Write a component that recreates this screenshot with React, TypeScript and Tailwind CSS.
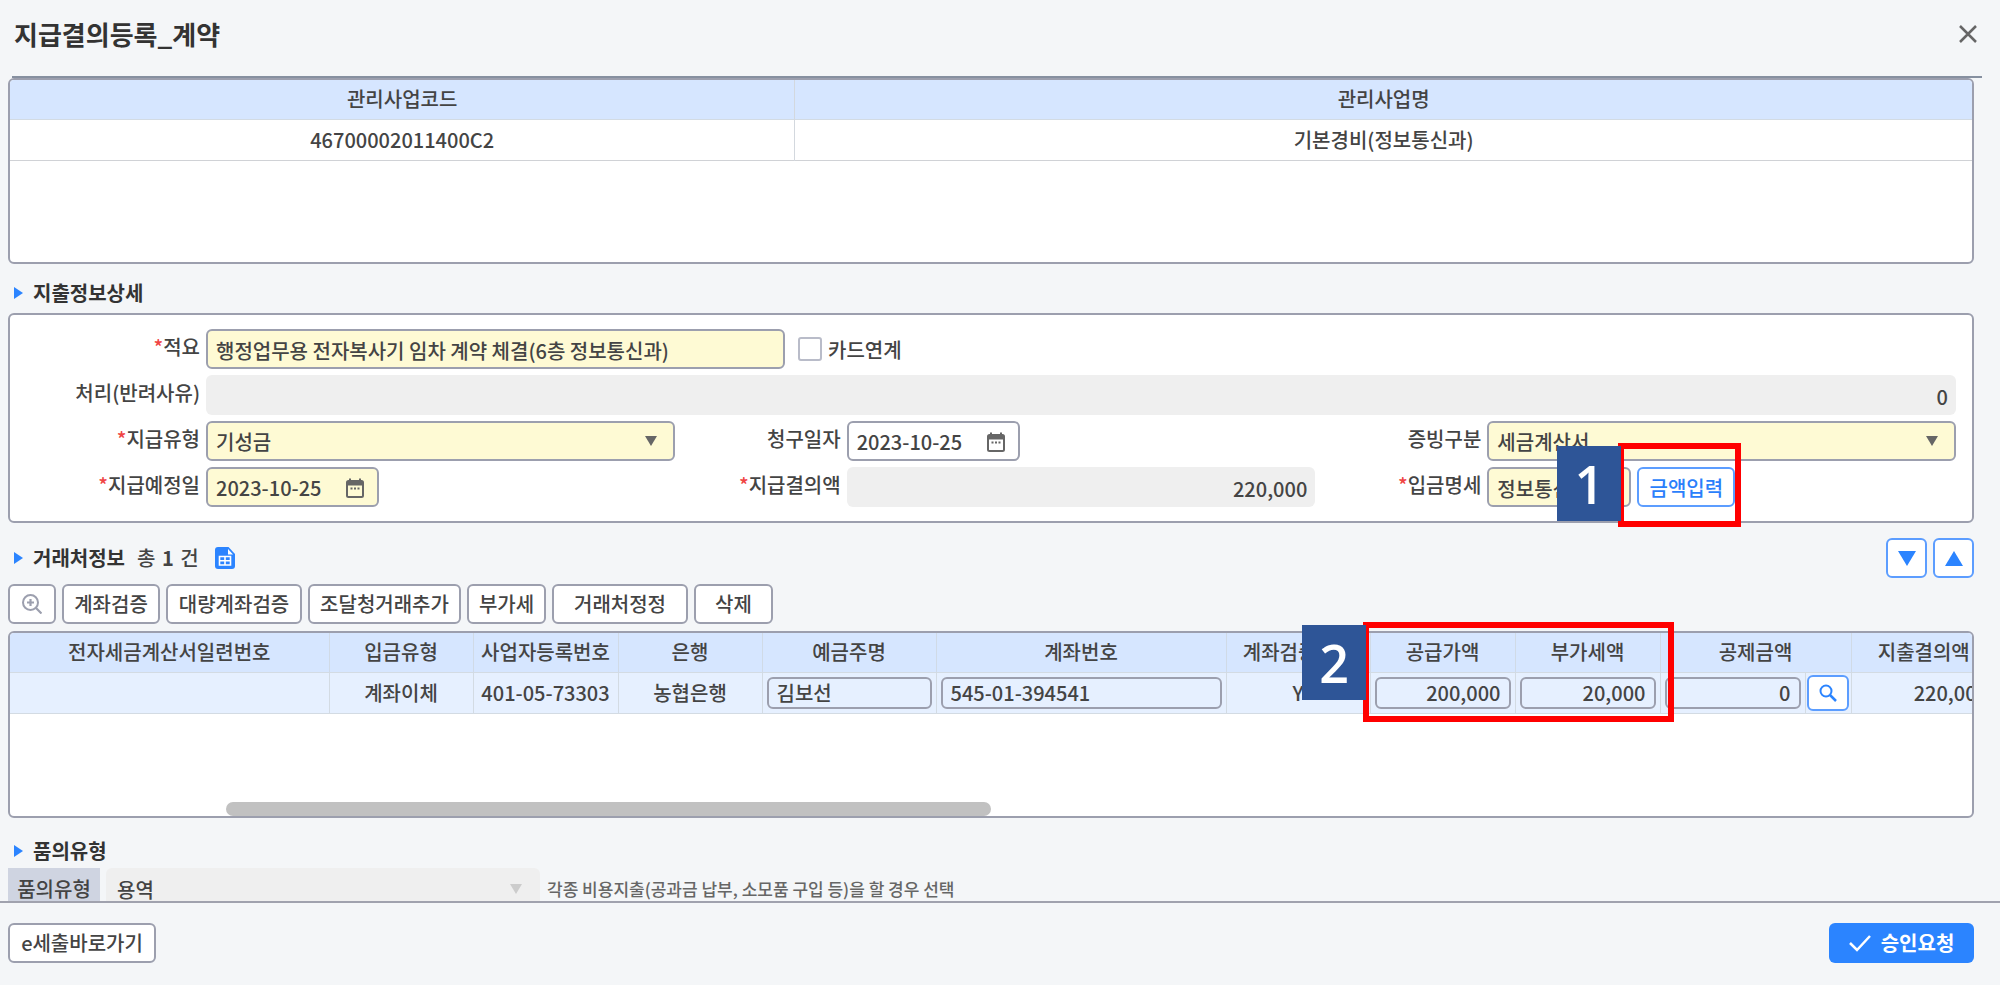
import type { ReactNode } from "react";

const BORDER = "border-2 border-[#9c9fae]";
const FIELD = "h-10 rounded-md px-2 pt-[2px] min-w-0";
const YELLOW = "bg-[#fefad4]";

function Caret({ className = "" }: { className?: string }) {
  return (
    <svg viewBox="0 0 12 10" className={`w-3 h-[10px] ${className}`} fill="currentColor" aria-hidden="true">
      <path d="M0 0h12L6 10z" />
    </svg>
  );
}

function CalendarIcon() {
  return (
    <svg viewBox="0 0 18 20" className="w-[18px] h-5" fill="none" stroke="currentColor" aria-hidden="true">
      <rect x="1" y="3" width="16" height="16" rx="1.5" strokeWidth="2" />
      <path d="M1 3h16v4.500H1z" fill="currentColor" stroke="none" />
      <path d="M4 0.500v4M14 0.500v4" strokeWidth="2" />
      <path d="M4.500 10.500h2M8 10.500h2M11.500 10.500h2" strokeWidth="2" />
    </svg>
  );
}

function SheetIcon() {
  return (
    <svg viewBox="0 0 20 22" className="w-5 h-[22px]" aria-hidden="true">
      <path d="M3 0h10.500L20 7v12a3 3 0 0 1-3 3H3a3 3 0 0 1-3-3V3a3 3 0 0 1 3-3z" fill="#2b84ff" />
      <path d="M13 2v5.500h5z" fill="#fff" />
      <path d="M4.500 9.500h11v8.500h-11zM10 9.500v8.500M4.500 13.700h11" fill="none" stroke="#fff" strokeWidth="1.600" />
    </svg>
  );
}

function SearchIcon() {
  return (
    <svg viewBox="0 0 18 18" className="w-[18px] h-[18px]" fill="none" stroke="currentColor" strokeWidth="2" aria-hidden="true">
      <circle cx="7" cy="7" r="5.500" />
      <path d="M11 11l6 6" strokeWidth="2.500" />
    </svg>
  );
}

function SectionTitle({ children }: { children: ReactNode }) {
  return (
    <h2 className="flex items-center font-bold text-[#333]">
      <svg viewBox="0 0 9 12" className="ml-[6px] mr-[10px] w-[9px] h-3" fill="#2b84ff" aria-hidden="true">
        <path d="M0 0l9 6-9 6z" />
      </svg>
      {children}
    </h2>
  );
}

function Label({ id, required, children }: { id: string; required?: boolean; children: ReactNode }) {
  return (
    <label htmlFor={id} className="w-[172px] shrink-0 pr-[6px] pb-1 text-right">
      {required && <span className="text-[#f04444]">*</span>}
      {children}
    </label>
  );
}

function SelectBox({ id, value }: { id: string; value: string }) {
  return (
    <div className="relative flex-1 min-w-0">
      <select id={id} className={`${FIELD} ${BORDER} ${YELLOW} w-full appearance-none`}>
        <option>{value}</option>
      </select>
      <Caret className="absolute right-[18px] top-[15px] text-[#666] pointer-events-none" />
    </div>
  );
}

function DateBox({ id, tone }: { id: string; tone: string }) {
  return (
    <div className={`${FIELD} ${BORDER} ${tone} w-[173px] flex items-center`}>
      <input id={id} defaultValue="2023-10-25" className="w-[130px] min-w-0 outline-none" />
      <button type="button" aria-label="달력" className="text-[#666]">
        <CalendarIcon />
      </button>
    </div>
  );
}

function StepBadge({ n, className }: { n: number; className: string }) {
  return (
    <span
      className={`absolute z-20 w-16 h-[75px] flex items-center justify-center bg-[#2e5597] text-white font-semibold text-[52px] leading-none font-['Open_Sans','Noto_Sans',sans-serif] ${className}`}
    >
      {n}
    </span>
  );
}

const ACTIONS = [
  { label: "계좌검증", width: "w-[98px]" },
  { label: "대량계좌검증", width: "w-[136px]" },
  { label: "조달청거래추가", width: "w-[153px]" },
  { label: "부가세", width: "w-[79px]" },
  { label: "거래처정정", width: "w-[136px]" },
  { label: "삭제", width: "w-[79px]" },
];

const COLUMNS = [
  "w-[319px]",
  "w-[144px]",
  "w-[145px]",
  "w-[144px]",
  "w-[174px]",
  "w-[290px]",
  "w-[144px]",
  "w-[145px]",
  "w-[145px]",
  "w-[145px]",
  "w-[46px]",
  "w-[145px]",
];

const HEADERS = [
  "전자세금계산서일련번호",
  "입금유형",
  "사업자등록번호",
  "은행",
  "예금주명",
  "계좌번호",
  "계좌검증여부",
  "공급가액",
  "부가세액",
  "공제금액",
  "지출결의액",
];

function CellInput({ label, value, right }: { label: string; value: string; right?: boolean }) {
  return (
    <td className="px-1">
      <input
        aria-label={label}
        defaultValue={value}
        className={`block w-full h-8 rounded-md border-2 border-[#9c9fae] px-2 ${right ? "text-right" : ""}`}
      />
    </td>
  );
}

export default function App() {
  return (
    <div className="h-screen flex flex-col bg-[#f4f6f8] text-[#444] text-[20px] leading-[30px] font-medium font-['Noto_Sans_CJK_KR',sans-serif]">
      <main className="flex-1 min-h-0 overflow-hidden">
        <header className="ml-3 mr-[18px] h-[78px] pb-2 pl-[2px] pr-[5px] flex items-center justify-between border-b-2 border-[#8690a0]">
          <h1 className="text-[26px] font-bold text-[#333]">지급결의등록_계약</h1>
          <button type="button" aria-label="닫기" className="text-[#666]">
            <svg viewBox="0 0 18 18" className="w-[18px] h-[18px]" stroke="currentColor" strokeWidth="2.500" aria-hidden="true">
              <path d="M1 1l16 16M17 1L1 17" />
            </svg>
          </button>
        </header>

        <div className="ml-2 mr-[26px]">
          <section className={`${BORDER} h-[186px] rounded-md bg-white overflow-hidden`}>
            <table className="w-full table-fixed text-center">
              <thead>
                <tr className="h-[39px] bg-[#d6e6ff] border-b border-[#d3dbe3]">
                  <th className="w-2/5 font-medium border-r border-[#d3d8de]">관리사업코드</th>
                  <th className="font-medium">관리사업명</th>
                </tr>
              </thead>
              <tbody>
                <tr className="h-[41px] border-b border-[#d0d2d6]">
                  <td className="border-r border-[#d3d8de]">46700002011400C2</td>
                  <td>기본경비(정보통신과)</td>
                </tr>
              </tbody>
            </table>
          </section>

          <div className="h-[49px] pt-2 flex items-center">
            <SectionTitle>지출정보상세</SectionTitle>
          </div>

          <section className={`${BORDER} rounded-md bg-white py-[14px] pl-6 pr-4 flex flex-col gap-[6px]`}>
            <div className="flex items-center">
              <Label id="summary" required>적요</Label>
              <input
                id="summary"
                defaultValue="행정업무용 전자복사기 임차 계약 체결(6층 정보통신과)"
                className={`${FIELD} ${BORDER} ${YELLOW} w-[579px]`}
              />
              <input
                id="card"
                type="checkbox"
                className="ml-[13px] mr-[6px] w-6 h-6 shrink-0 appearance-none rounded-[3px] border-2 border-[#b9bcc9] bg-white"
              />
              <label htmlFor="card" className="pt-[2px]">카드연계</label>
            </div>
            <div className="flex items-center">
              <Label id="reason">처리(반려사유)</Label>
              <input id="reason" readOnly defaultValue="0" className={`${FIELD} flex-1 bg-[#efefef] text-right`} />
            </div>
            <div className="grid grid-cols-3">
              <div className="flex items-center">
                <Label id="payType" required>지급유형</Label>
                <SelectBox id="payType" value="기성금" />
              </div>
              <div className="flex items-center">
                <Label id="claimDate">청구일자</Label>
                <DateBox id="claimDate" tone="bg-white" />
              </div>
              <div className="flex items-center">
                <Label id="proof">증빙구분</Label>
                <SelectBox id="proof" value="세금계산서" />
              </div>
            </div>
            <div className="grid grid-cols-3">
              <div className="flex items-center">
                <Label id="payDate" required>지급예정일</Label>
                <DateBox id="payDate" tone={YELLOW} />
              </div>
              <div className="flex items-center">
                <Label id="amount" required>지급결의액</Label>
                <input id="amount" readOnly defaultValue="220,000" className={`${FIELD} flex-1 bg-[#efefef] text-right`} />
              </div>
              <div className="flex items-center">
                <Label id="deposit" required>입금명세</Label>
                <input id="deposit" defaultValue="정보통신과" className={`${FIELD} ${BORDER} ${YELLOW} w-[144px]`} />
                <div className="relative ml-[6px]">
                  <button type="button" className="w-[98px] h-10 pt-[2px] rounded-md border-2 border-[#5c9dff] bg-white text-[#2b7ffb]">
                    금액입력
                  </button>
                  <span className="absolute z-10 -left-[19px] -top-6 w-[123px] h-[84px] border-6 border-[#ff0000] pointer-events-none" />
                  <StepBadge n={1} className="-left-20 -top-[21px]" />
                </div>
              </div>
            </div>
          </section>

          <div className="h-[61px] pt-[15px] pb-[6px] flex items-center">
            <SectionTitle>거래처정보</SectionTitle>
            <p className="ml-3 mr-4">
              총 <b className="mx-[2px]">1</b> 건
            </p>
            <button type="button" aria-label="엑셀 다운로드">
              <SheetIcon />
            </button>
            <div className="ml-auto flex gap-[6px] text-[#2b84ff]">
              <button type="button" aria-label="아래로" className="w-[41px] h-10 flex items-center justify-center rounded-md border-2 border-[#5c9dff] bg-white">
                <svg viewBox="0 0 18 15" className="w-[18px] h-[15px]" fill="currentColor" aria-hidden="true">
                  <path d="M0 0h18L9 15z" />
                </svg>
              </button>
              <button type="button" aria-label="위로" className="w-[41px] h-10 flex items-center justify-center rounded-md border-2 border-[#5c9dff] bg-white">
                <svg viewBox="0 0 18 15" className="w-[18px] h-[15px]" fill="currentColor" aria-hidden="true">
                  <path d="M0 15h18L9 0z" />
                </svg>
              </button>
            </div>
          </div>

          <div className="flex gap-[6px] mb-[7px]">
            <button type="button" aria-label="확대" className={`${BORDER} w-12 h-10 rounded-md bg-white flex items-center justify-center text-[#9c9fae]`}>
              <svg viewBox="0 0 20 20" className="w-5 h-5" fill="none" stroke="currentColor" strokeWidth="2" aria-hidden="true">
                <circle cx="8.500" cy="8.500" r="7.500" />
                <path d="M14 14l5.500 5.500M8.500 5v7M5 8.500h7" strokeWidth="2.200" />
              </svg>
            </button>
            {ACTIONS.map((a) => (
              <button key={a.label} type="button" className={`${BORDER} ${a.width} h-10 rounded-md bg-white whitespace-nowrap`}>
                {a.label}
              </button>
            ))}
          </div>

          <div className="relative">
            <section className={`${BORDER} h-[187px] rounded-md bg-white overflow-hidden flex flex-col`}>
              <table className="w-[1986px] table-fixed text-center">
                <colgroup>
                  {COLUMNS.map((w, i) => (
                    <col key={i} className={w} />
                  ))}
                </colgroup>
                <thead>
                  <tr className="h-[39px] bg-[#d6e6ff] border-b border-[#d3dbe3] divide-x divide-[#d0dae6]">
                    {HEADERS.map((h) => (
                      <th key={h} colSpan={h === "공제금액" ? 2 : 1} className="font-medium whitespace-nowrap">
                        {h}
                      </th>
                    ))}
                  </tr>
                </thead>
                <tbody>
                  <tr className="h-[41px] bg-[#e6f0ff] border-b border-[#d3dbe3] divide-x divide-[#d3dbe3]">
                    <td />
                    <td>계좌이체</td>
                    <td>401-05-73303</td>
                    <td>농협은행</td>
                    <CellInput label="예금주명" value="김보선" />
                    <CellInput label="계좌번호" value="545-01-394541" />
                    <td>Y</td>
                    <CellInput label="공급가액" value="200,000" right />
                    <CellInput label="부가세액" value="20,000" right />
                    <CellInput label="공제금액" value="0" right />
                    <td>
                      <button type="button" aria-label="공제금액 조회" className="mx-auto w-[42px] h-9 flex items-center justify-center rounded-md border-2 border-[#5c9dff] bg-white text-[#2b84ff]">
                        <SearchIcon />
                      </button>
                    </td>
                    <td className="pr-2 text-right">220,000</td>
                  </tr>
                </tbody>
              </table>
              <div className="mt-auto ml-4 pl-[200px]">
                <div className="w-[765px] h-[14px] rounded-full bg-[#c1c1c1]" />
              </div>
            </section>
            <span className="absolute z-10 left-[1355px] -top-[9px] w-[311px] h-[100px] border-6 border-[#ff0000] pointer-events-none" />
            <StepBadge n={2} className="left-[1294px] -top-[6px]" />
          </div>

          <div className="h-[50px] pt-4 flex items-center">
            <SectionTitle>품의유형</SectionTitle>
          </div>

          <div className="flex items-center h-10">
            <label htmlFor="draftType" className="w-[92px] h-10 pt-[6px] mr-[6px] text-center bg-[#cfd4e1]">
              품의유형
            </label>
            <div className="relative w-[434px]">
              <select id="draftType" disabled className="w-full h-10 pt-1 pl-[11px] rounded-md appearance-none bg-[#efefef] opacity-100">
                <option>용역</option>
              </select>
              <Caret className="absolute right-[18px] top-4 text-[#ccc]" />
            </div>
            <p className="ml-[7px] pt-[2px] text-[17px] text-[#666]">각종 비용지출(공과금 납부, 소모품 구입 등)을 할 경우 선택</p>
          </div>
        </div>
      </main>

      <footer className="h-[84px] pb-[2px] pl-2 pr-[26px] flex items-center justify-between border-t-2 border-[#a0a2ae]">
        <button type="button" className={`${BORDER} w-[148px] h-10 rounded-md bg-white`}>
          e세출바로가기
        </button>
        <button type="button" className="w-[145px] h-10 rounded-md bg-[#2b84ff] text-white font-bold flex items-center justify-center gap-[10px]">
          <svg viewBox="0 0 22 17" className="w-[22px] h-[17px]" fill="none" stroke="currentColor" strokeWidth="2.500" aria-hidden="true">
            <path d="M1 8l7 7L21 1" />
          </svg>
          승인요청
        </button>
      </footer>
    </div>
  );
}
